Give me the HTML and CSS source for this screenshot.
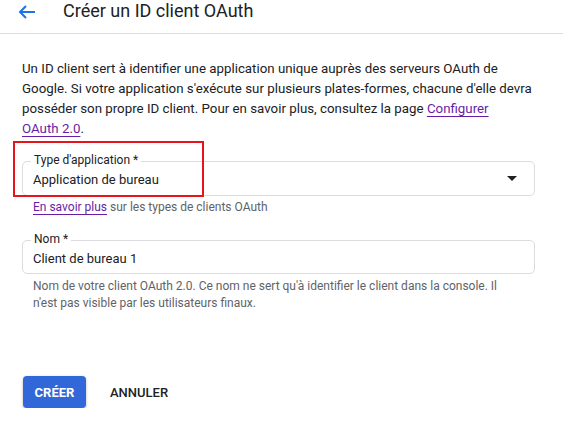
FILE: index.html
```html
<!DOCTYPE html>
<html lang="fr">
<head>
    <meta charset="UTF-8">
    <title>Créer un ID client OAuth</title>
    <link rel="stylesheet" href="styles.css">
</head>
<body>

    <div class="header">
        <span class="back">
            <svg width="18" height="14" viewBox="0 0 18 14">
                <path d="M17 7H2M8 1L2 7l6 6" fill="none" stroke="#1a73e8" stroke-width="2"/>
            </svg>
        </span>
        <h1>Créer un ID client OAuth</h1>
    </div>

    <div class="content">
        <p class="intro">Un ID client sert à identifier une application unique auprès des serveurs OAuth de Google. Si votre application s'exécute sur plusieurs plates-formes, chacune d'elle devra posséder son propre ID client. Pour en savoir plus, consultez la page <a href="#">Configurer <span class="nowrap">OAuth 2.0</span></a>.</p>

        <div class="field field-select">
            <span class="field-label">Type d'application *</span>
            <span class="field-value">Application de bureau</span>
            <span class="caret"></span>
            <div class="highlight"></div>
        </div>
        <div class="hint"><a href="#">En savoir plus</a> sur les types de clients OAuth</div>

        <div class="field field-name">
            <span class="field-label">Nom *</span>
            <span class="field-value">Client de bureau 1</span>
        </div>
        <div class="hint hint-name">Nom de votre client OAuth 2.0. Ce nom ne sert qu'à identifier le client dans la console. Il n'est pas visible par les utilisateurs finaux.</div>

        <div class="actions">
            <button class="btn-primary">CRÉER</button>
            <button class="btn-text">ANNULER</button>
        </div>
    </div>

</body>
</html>
```

FILE: styles.css
```css
body {
    margin: 0;
    background-color: #fff;
    font-family: Roboto, "Liberation Sans", sans-serif;
    color: #202124;
}
.header {
    display: flex;
    align-items: flex-start;
    height: 33px;
    border-bottom: 1px solid #dadce0;
}
.back {
    width: 18px;
    margin: 4px 0 0 18px;
}
h1 {
    margin: 0 0 0 27px;
    font-size: 18px;
    font-weight: 400;
    line-height: 21px;
}
.content {
    padding: 25px 28px 0 22px;
}
.intro {
    margin: 0 -3px 0 0;
    font-size: 13.3px;
    line-height: 20px;
}
.nowrap {
    white-space: nowrap;
}
a {
    color: #681da8;
    text-decoration: underline;
    text-underline-offset: 3px;
}
.field {
    position: relative;
    display: flex;
    align-items: center;
    border: 1px solid #dadce0;
    border-radius: 5px;
    padding: 0 10px;
}
.field-select {
    height: 33px;
    margin-top: 22px;
}
.field-name {
    height: 32px;
    margin-top: 24px;
}
.field-label {
    position: absolute;
    left: 8px;
    top: -9px;
    padding: 0 3px;
    background: #fff;
    font-size: 12px;
    line-height: 15px;
}
.field-value {
    flex: 1;
    font-size: 13px;
    padding-top: 2px;
}
.caret {
    width: 0;
    height: 0;
    margin-right: 7px;
    border-left: 5px solid transparent;
    border-right: 5px solid transparent;
    border-top: 5px solid #202124;
}
.highlight {
    position: absolute;
    left: -10px;
    top: -21px;
    width: 187px;
    height: 52px;
    border: 2px solid #e8141b;
}
.hint {
    padding: 3px 0 0 11px;
    font-size: 12px;
    line-height: 17px;
    color: #5f6368;
}
.hint-name {
    padding: 4px 30px 0 11px;
}
.actions {
    display: flex;
    gap: 24px;
    margin-top: 64px;
    padding-left: 1px;
}
.btn-primary, .btn-text {
    height: 32px;
    border: none;
    border-radius: 4px;
    font-family: Roboto, "Liberation Sans", sans-serif;
    font-size: 13px;
    cursor: pointer;
}
.btn-primary {
    width: 63px;
    background-color: #3167d8;
    color: #fff;
    font-weight: 700;
    box-shadow: 0 1px 3px rgba(0, 0, 0, 0.3);
}
.btn-text {
    background: none;
    color: #202124;
    font-weight: 500;
    padding: 0;
}
```
